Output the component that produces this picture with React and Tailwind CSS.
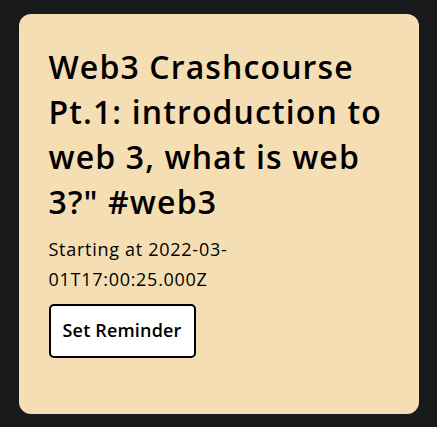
export default function App() {
  return (
    <div className="min-h-screen w-full bg-[#18191b] flex items-center justify-center" style={{ fontFamily: '"Open Sans", sans-serif' }}>
      <div className="w-[400px] h-[400px] rounded-xl bg-[#f5deb3] p-[30px] flex flex-col items-start text-black">
        <h1 className="text-[32px] leading-[45px] font-semibold tracking-[0.035em]">
          Web3 Crashcourse Pt.1: introduction to web 3, what is web 3?" #web3
        </h1>
        <p className="mt-[10px] text-[18px] leading-[30px] tracking-[0.04em] max-w-[220px]">
          Starting at 2022-03-01T17:00:25.000Z
        </p>
        <button className="mt-[10px] h-[54px] px-[12px] bg-white border-2 border-black rounded-[5px] text-[18px] font-semibold tracking-[0.01em]">
          Set Reminder
        </button>
      </div>
    </div>
  );
}
